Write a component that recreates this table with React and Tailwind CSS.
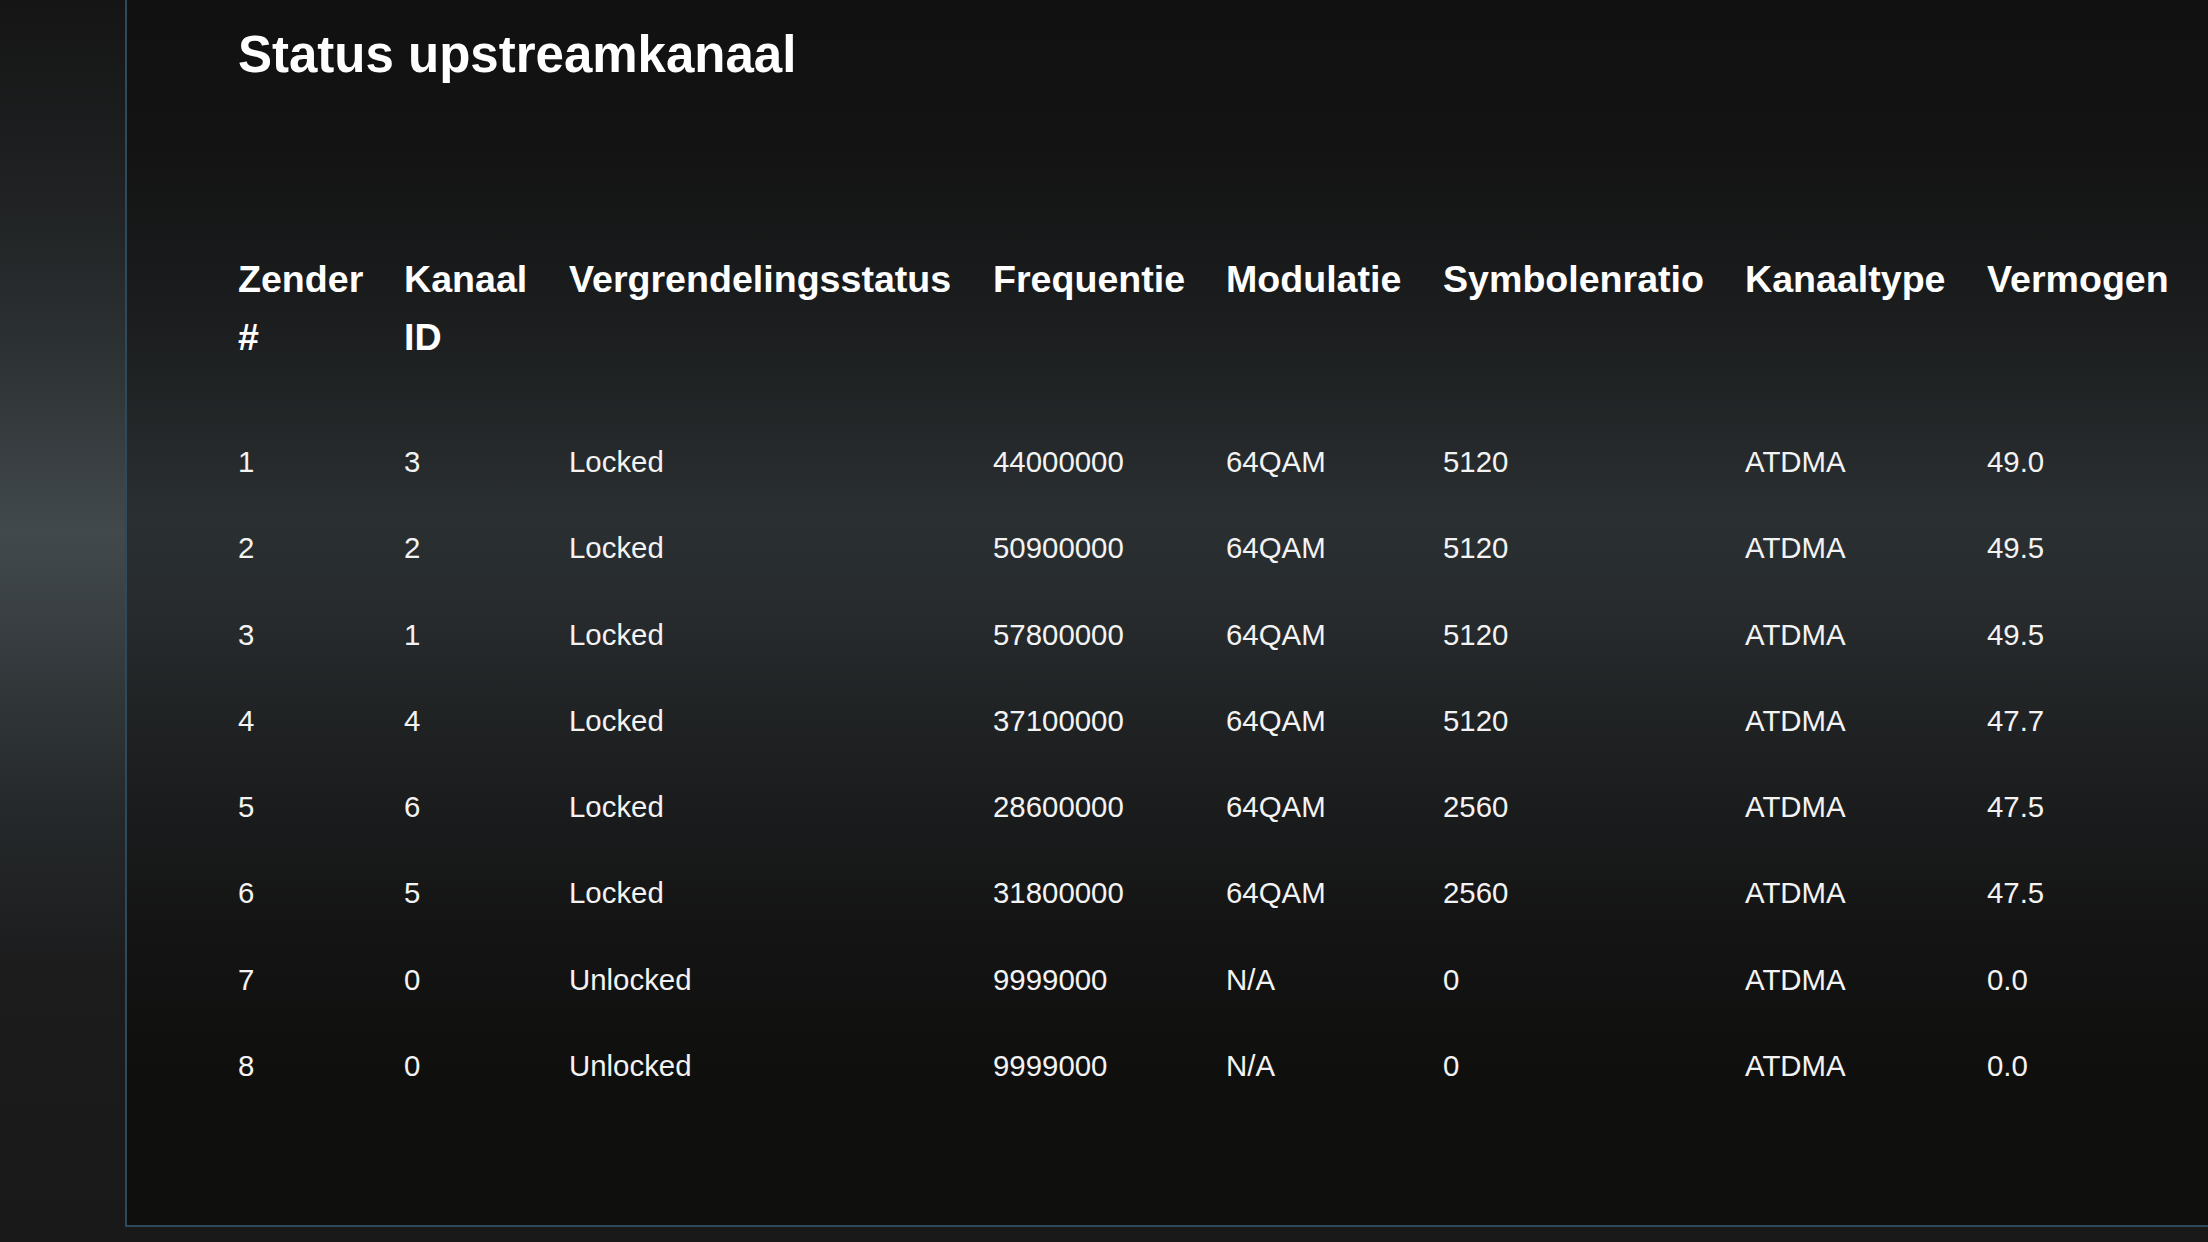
import React from 'react';

const headers = [
  ['Zender', '#'],
  ['Kanaal', 'ID'],
  ['Vergrendelingsstatus'],
  ['Frequentie'],
  ['Modulatie'],
  ['Symbolenratio'],
  ['Kanaaltype'],
  ['Vermogen'],
];

const rows = [
  ['1', '3', 'Locked', '44000000', '64QAM', '5120', 'ATDMA', '49.0'],
  ['2', '2', 'Locked', '50900000', '64QAM', '5120', 'ATDMA', '49.5'],
  ['3', '1', 'Locked', '57800000', '64QAM', '5120', 'ATDMA', '49.5'],
  ['4', '4', 'Locked', '37100000', '64QAM', '5120', 'ATDMA', '47.7'],
  ['5', '6', 'Locked', '28600000', '64QAM', '2560', 'ATDMA', '47.5'],
  ['6', '5', 'Locked', '31800000', '64QAM', '2560', 'ATDMA', '47.5'],
  ['7', '0', 'Unlocked', '9999000', 'N/A', '0', 'ATDMA', '0.0'],
  ['8', '0', 'Unlocked', '9999000', 'N/A', '0', 'ATDMA', '0.0'],
];

const UpstreamStatus = () => {
  return (
    <div className="w-[2208px] h-[1242px] overflow-hidden flex font-['Liberation_Sans',Arial,sans-serif] bg-[linear-gradient(180deg,#151515_0%,#1f2122_15%,#2c3133_28%,#42494c_43%,#363c3f_52%,#262a2c_64%,#1c1c1d_78%,#1a191a_100%)]">
      {/* left gutter */}
      <div className="w-[125px] shrink-0" />

      {/* Main panel */}
      <div className="flex-1 min-w-0 h-[1227px] border-l-2 border-b-2 border-[#2d4a5b] pl-[111px] bg-[linear-gradient(180deg,#111111_0%,#131313_12%,#1b1d1e_26%,#2a2f31_42%,#272b2d_50%,#1d1f20_62%,#141414_76%,#0f0f0e_88%,#0f0f0e_100%)]">
        <h1 className="pt-[25px] text-[51px] leading-[60px] font-bold text-white">
          Status upstreamkanaal
        </h1>

        <table className="mt-[165px] w-[2009px] table-fixed border-collapse text-left">
          <colgroup>
            <col className="w-[166px]" />
            <col className="w-[165px]" />
            <col className="w-[424px]" />
            <col className="w-[233px]" />
            <col className="w-[217px]" />
            <col className="w-[302px]" />
            <col className="w-[242px]" />
            <col className="w-[260px]" />
          </colgroup>
          <thead>
            <tr>
              {headers.map((h, i) => (
                <th
                  key={i}
                  className="p-0 pb-[53px] align-top text-[37.6px] leading-[58px] font-bold text-white whitespace-nowrap"
                >
                  {h.map((line, j) => (
                    <div key={j}>{line}</div>
                  ))}
                </th>
              ))}
            </tr>
          </thead>
          <tbody>
            {rows.map((row, i) => (
              <tr key={i}>
                {row.map((cell, j) => (
                  <td key={j} className="p-0 text-[29.4px] leading-[86.3px] text-[#f3f3f3] whitespace-nowrap">
                    {cell}
                  </td>
                ))}
              </tr>
            ))}
          </tbody>
        </table>
      </div>
    </div>
  );
};

export default UpstreamStatus;
